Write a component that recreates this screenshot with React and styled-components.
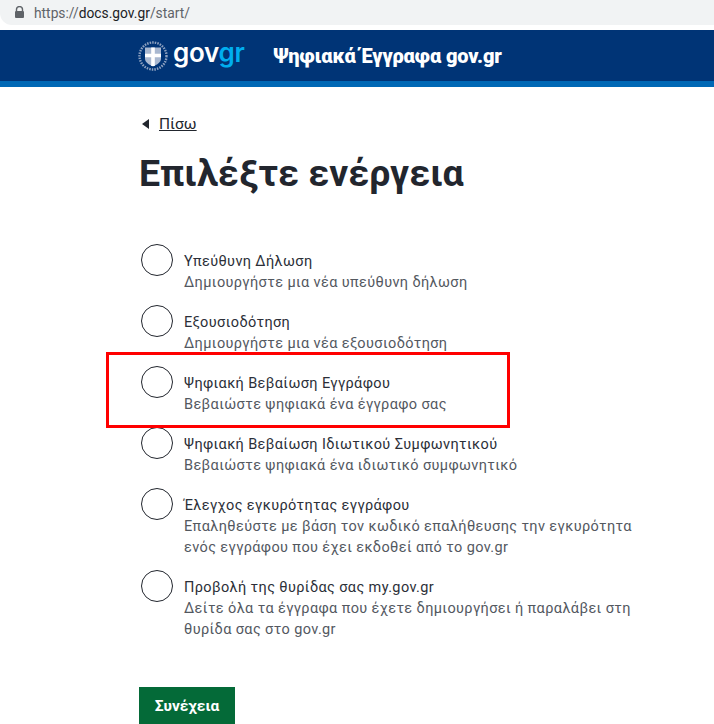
import React from "react";
import styled, { createGlobalStyle } from "styled-components";

const GlobalStyle = createGlobalStyle`
  html, body {
    margin: 0;
    padding: 0;
    background: #fff;
    font-family: Roboto, "Liberation Sans", sans-serif;
    overflow: hidden;
  }
`;

const Page = styled.div`
  position: relative;
  width: 714px;
  height: 724px;
  overflow: hidden;
`;

const AddressBar = styled.div`
  display: flex;
  align-items: center;
  gap: 9px;
  height: 25px;
  padding-left: 14px;
  background: #f1f3f4;
  border-bottom-left-radius: 12px;
  color: #5f6368;
  font-size: 13.8px;
`;

const Url = styled.span`
  b {
    font-weight: 400;
    color: #202124;
  }
`;

const Header = styled.header`
  display: flex;
  align-items: center;
  height: 51px;
  margin-top: 5px;
  padding-left: 137px;
  background: #003476;
  border-bottom: 6px solid #0068b5;
`;

const Logo = styled.div`
  display: flex;
  align-items: center;
  gap: 4px;
`;

const LogoText = styled.span`
  margin-top: -7px;
  font-family: Inter, sans-serif;
  font-size: 26px;
  font-weight: 600;
  letter-spacing: -0.3px;
  color: #fff;

  em {
    font-style: normal;
    color: #00aeef;
  }
`;

const SiteName = styled.span`
  margin-left: 29px;
  font-size: 20px;
  font-weight: 900;
  letter-spacing: -0.1px;
  color: #fff;
`;

const Content = styled.main`
  width: 500px;
  padding: 28px 0 0 139px;
`;

const BackLink = styled.a`
  display: flex;
  align-items: center;
  gap: 10px;
  height: 18px;
  padding-left: 3px;
  font-size: 15.5px;
  color: #22262e;

  span {
    text-decoration: underline;
  }
`;

const BackArrow = styled.i`
  width: 0;
  height: 0;
  border-style: solid;
  border-width: 5px 7px 5px 0;
  border-color: transparent #22262e transparent transparent;
`;

const Title = styled.h1`
  margin: 18px 0 49px;
  font-size: 37.5px;
  line-height: 44px;
  font-weight: 700;
  color: #22262e;
`;

const Options = styled.div`
  display: flex;
  flex-direction: column;
  gap: 12px;
`;

const Option = styled.label`
  display: flex;
  gap: 12px;
  padding-left: 2px;
`;

const Radio = styled.span`
  flex: none;
  box-sizing: border-box;
  width: 32px;
  height: 32px;
  margin-right: -1px;
  border: 1px solid #22262e;
  border-radius: 50%;
  background: #fff;
`;

const OptionText = styled.div`
  padding-top: 7px;
  font-size: 14.5px;
  line-height: 21px;
  letter-spacing: 0.38px;
  white-space: nowrap;
`;

const OptionTitle = styled.div`
  color: #2b2f38;
`;

const OptionHint = styled.div`
  color: #53585f;
`;

const SubmitButton = styled.button`
  display: block;
  width: 96px;
  height: 37px;
  margin-top: 47px;
  border: 0;
  background: #046a38;
  color: #fff;
  font-family: inherit;
  font-size: 15.5px;
  font-weight: 700;
`;

const Highlight = styled.div`
  position: absolute;
  left: 106px;
  top: 352px;
  width: 404px;
  height: 76px;
  box-sizing: border-box;
  border: 3px solid #f00;
`;

const options = [
  { title: "Υπεύθυνη Δήλωση", hint: ["Δημιουργήστε μια νέα υπεύθυνη δήλωση"] },
  { title: "Εξουσιοδότηση", hint: ["Δημιουργήστε μια νέα εξουσιοδότηση"] },
  { title: "Ψηφιακή Βεβαίωση Εγγράφου", hint: ["Βεβαιώστε ψηφιακά ένα έγγραφο σας"] },
  { title: "Ψηφιακή Βεβαίωση Ιδιωτικού Συμφωνητικού", hint: ["Βεβαιώστε ψηφιακά ένα ιδιωτικό συμφωνητικό"] },
  {
    title: "Έλεγχος εγκυρότητας εγγράφου",
    hint: [
      "Επαληθεύστε με βάση τον κωδικό επαλήθευσης την εγκυρότητα",
      "ενός εγγράφου που έχει εκδοθεί από το gov.gr",
    ],
  },
  {
    title: "Προβολή της θυρίδας σας my.gov.gr",
    hint: [
      "Δείτε όλα τα έγγραφα που έχετε δημιουργήσει ή παραλάβει στη",
      "θυρίδα σας στο gov.gr",
    ],
  },
];

function Emblem() {
  return (
    <svg width="32" height="32" viewBox="0 0 32 32">
      <circle cx="16" cy="16" r="13.500" fill="none" stroke="#8ea2c0" strokeWidth="2.4" strokeDasharray="1.5 1.1" />
      <path d="M8 7.500h16v11c0 4-4 6-8 8-4-2-8-4-8-8z" fill="#a9b8d0" />
      <path d="M16 7.500v18.500M8 15.500h16" stroke="#fff" strokeWidth="3.6" />
    </svg>
  );
}

export default function App() {
  return (
    <Page>
      <GlobalStyle />
      <AddressBar>
        <svg width="11" height="13" viewBox="0 0 11 13">
          <path d="M2.5 5V3.6a3 3 0 0 1 6 0V5" fill="none" stroke="#5f6368" strokeWidth="1.4" />
          <rect x="1" y="5" width="9" height="7" rx="1" fill="#5f6368" />
        </svg>
        <Url>
          https://<b>docs.gov.gr</b>/start/
        </Url>
      </AddressBar>
      <Header>
        <Logo>
          <Emblem />
          <LogoText>
            gov<em>gr</em>
          </LogoText>
        </Logo>
        <SiteName>Ψηφιακά Έγγραφα gov.gr</SiteName>
      </Header>
      <Content>
        <BackLink>
          <BackArrow />
          <span>Πίσω</span>
        </BackLink>
        <Title>Επιλέξτε ενέργεια</Title>
        <Options>
          {options.map((o) => (
            <Option key={o.title}>
              <Radio />
              <OptionText>
                <OptionTitle>{o.title}</OptionTitle>
                {o.hint.map((line) => (
                  <OptionHint key={line}>{line}</OptionHint>
                ))}
              </OptionText>
            </Option>
          ))}
        </Options>
        <SubmitButton>Συνέχεια</SubmitButton>
      </Content>
      <Highlight />
    </Page>
  );
}
